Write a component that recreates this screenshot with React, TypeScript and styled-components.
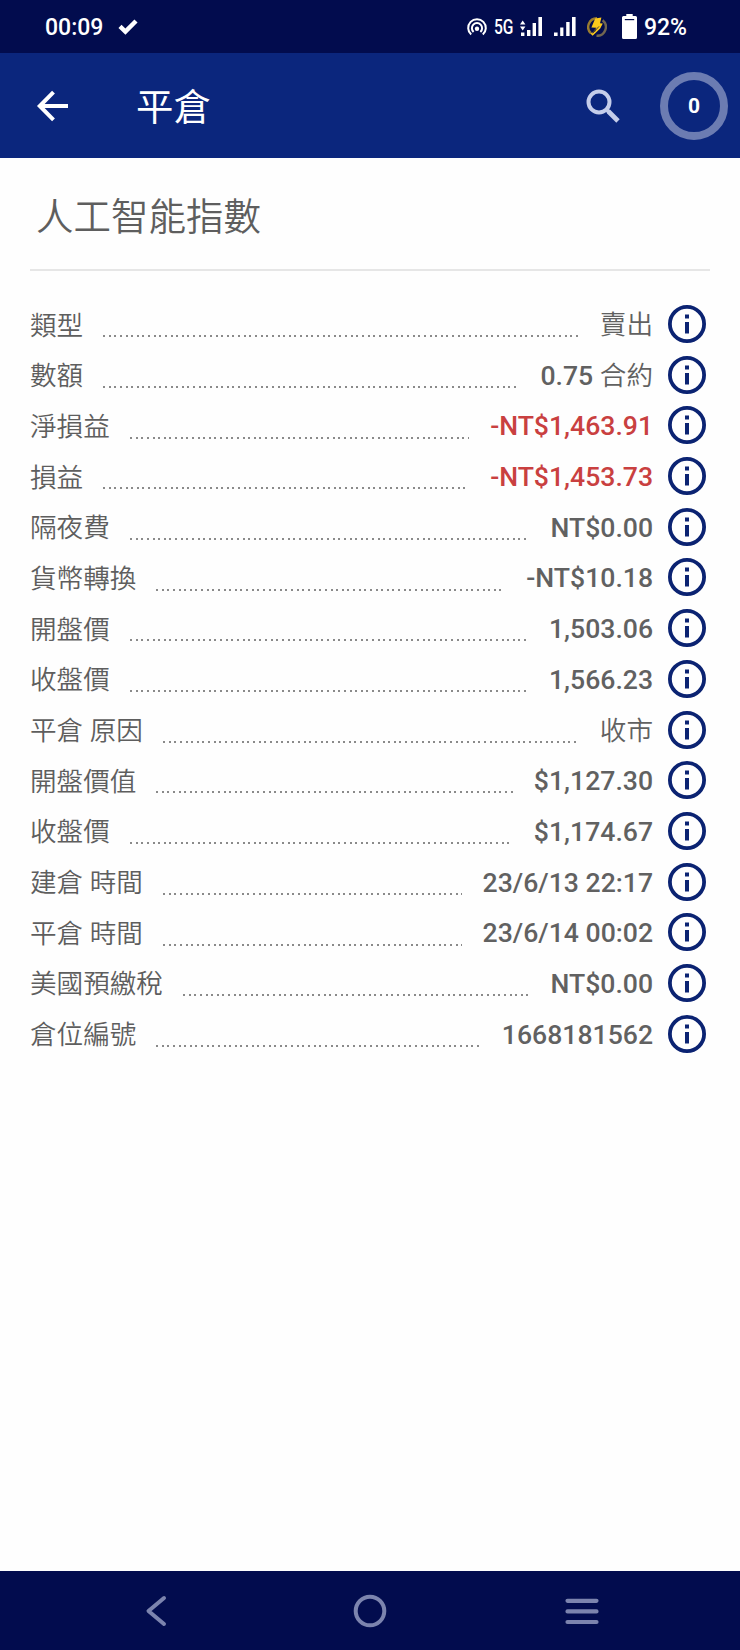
import React from "react";
import styled, { createGlobalStyle } from "styled-components";

const GlobalStyle = createGlobalStyle`
  * { box-sizing: border-box; }
  body { margin: 0; background: #fff; }
`;

const Screen = styled.div`
  display: flex;
  flex-direction: column;
  width: 740px;
  height: 1650px;
  background: #fefefe;
  color: #5e5e5e;
  font-family: Roboto, "Noto Sans CJK TC", sans-serif;
`;

const StatusBar = styled.header`
  display: flex;
  align-items: center;
  height: 53px;
  padding: 0 54px 0 45px;
  background: #020c4e;
  color: #fff;
  font-size: 23px;
  font-weight: 500;
`;

const Clock = styled.span`
  width: 73px;
  line-height: 53px;
  padding-top: 1px;
`;

const StatusIcons = styled.div`
  display: flex;
  align-items: center;
  margin-left: auto;
  line-height: 53px;
`;

const Network = styled.span`
  width: 20px;
  margin: 1px 6px 0 7px;
  font-size: 20px;
  transform: scaleX(0.78);
  transform-origin: left;
`;

const Battery = styled.span`
  width: 42px;
  margin-left: 7px;
  padding-top: 1px;
  letter-spacing: -0.1px;
`;

const AppBar = styled.div`
  display: flex;
  align-items: center;
  height: 105px;
  padding: 0 12px 0 36px;
  background: #0b267d;
  color: #fff;
`;

const Title = styled.h1`
  flex: 1;
  margin: 0 0 0 67px;
  padding-top: 5px;
  font-size: 37.4px;
  font-weight: 400;
  line-height: 54px;
`;

const Counter = styled.div`
  display: flex;
  align-items: center;
  justify-content: center;
  width: 68px;
  height: 68px;
  margin-left: 40px;
  border: 8px solid #6c7cb2;
  border-radius: 50%;
  font-size: 21px;
  font-weight: 700;
  padding-top: 1px;
`;

const Content = styled.main`
  flex: 1;
  padding: 0 30px;
`;

const Heading = styled.h2`
  height: 113px;
  margin: 0;
  padding: 32px 0 0 6px;
  border-bottom: 2px solid #e6e6e6;
  font-size: 37.5px;
  font-weight: 350;
  line-height: 54px;
`;

const Details = styled.div`
  padding-top: 27.7px;
`;

const Row = styled.div`
  display: flex;
  align-items: center;
  height: 50.69px;
  padding-right: 4px;
  font-size: 26.6px;
  line-height: 40px;
  white-space: nowrap;
`;

const Label = styled.span`
  padding-top: 3px;
  font-weight: 350;
`;

const Leader = styled.span`
  flex: 1;
  height: 2px;
  margin: 24.5px 21px 0 20px;
  background: repeating-linear-gradient(90deg, #8a8a8a 0 2px, transparent 2px 5.63px);
`;

const Value = styled.span<{ $loss?: boolean }>`
  padding-top: 2px;
  color: ${(p) => (p.$loss ? "#c94040" : "#616161")};
  font-weight: 500;
`;

const Han = styled.span`
  font-weight: 350;
`;

const InfoButton = styled.button`
  display: flex;
  margin: 0 0 0 15px;
  padding: 0;
  border: 0;
  background: none;
`;

const NavBar = styled.nav`
  display: flex;
  align-items: center;
  height: 79px;
  padding: 0 0 0 145px;
  background: #020c4e;
`;

const NavButton = styled.button<{ $gap?: number }>`
  display: flex;
  margin: 0 0 0 ${(p) => p.$gap ?? 0}px;
  padding: 0;
  border: 0;
  background: none;
`;

const Spacer = styled.span<{ $w: number }>`
  width: ${(p) => p.$w}px;
`;

type Detail = { label: string; value?: string; han?: string; loss?: boolean };

const details: Detail[] = [
  { label: "類型", han: "賣出" },
  { label: "數額", value: "0.75 ", han: "合約" },
  { label: "淨損益", value: "-NT$1,463.91", loss: true },
  { label: "損益", value: "-NT$1,453.73", loss: true },
  { label: "隔夜費", value: "NT$0.00" },
  { label: "貨幣轉換", value: "-NT$10.18" },
  { label: "開盤價", value: "1,503.06" },
  { label: "收盤價", value: "1,566.23" },
  { label: "平倉 原因", han: "收市" },
  { label: "開盤價值", value: "$1,127.30" },
  { label: "收盤價", value: "$1,174.67" },
  { label: "建倉 時間", value: "23/6/13 22:17" },
  { label: "平倉 時間", value: "23/6/14 00:02" },
  { label: "美國預繳稅", value: "NT$0.00" },
  { label: "倉位編號", value: "1668181562" },
];

const CheckIcon = () => (
  <svg width="20" height="16" viewBox="0 0 20 16" fill="none" stroke="#fff" strokeWidth="4.4">
    <path d="M2 7.4 7.4 12.6 18 2" />
  </svg>
);

const HotspotIcon = () => (
  <svg width="20" height="18" viewBox="0 0 20 18" fill="none" stroke="#fff" strokeWidth="2">
    <path d="M4.2 16.6A8.8 8.8 0 1 1 15.8 16.6" />
    <path d="M6.6 14A5.1 5.1 0 1 1 13.4 14" />
    <circle cx="10" cy="10.8" r="2.2" fill="#fff" stroke="none" />
  </svg>
);

const DataSignalIcon = () => (
  <svg width="23" height="20" viewBox="0 0 23 20" fill="#fff">
    <path d="M0 7.6 2.7 3.6 5.4 7.6ZM0 9.4H5.4L2.7 13.4ZM1 15.5h3.4V19H1ZM7 13h3.4v6H7ZM12.6 6h3.4v13h-3.4ZM18.4 0H22v19h-3.6Z" />
  </svg>
);

const SignalIcon = () => (
  <svg width="22" height="20" viewBox="0 0 22 20" fill="#fff">
    <path d="M0 15.4h3.6V19H0ZM6.2 10.4h3.2V19H6.2ZM12.2 5h3.4v14h-3.4ZM18 0h3.6v19H18Z" />
  </svg>
);

const BoltIcon = () => (
  <svg width="20" height="20" viewBox="0 0 20 20" fill="none">
    <path d="M10 1.2A8.8 8.8 0 0 0 4 16.4" stroke="#9a7c30" strokeWidth="2.4" />
    <path d="M15.6 3.2A8.8 8.8 0 0 1 9.5 18.8" stroke="#716650" strokeWidth="2.4" />
    <path d="M8.2 1.6 14.4.6 13 6.2 15.8 6.6 13.2 11.6 5.6 18.8 3.4 16.4 8.4 14.2 9 10.8 4.4 10.4Z" fill="#fbc91c" />
    <path d="M9 10.8 5.8 16.2 12 9.4" stroke="#4b4032" strokeWidth="1" />
  </svg>
);

const BatteryIcon = () => (
  <svg width="15" height="25" viewBox="0 0 15 25">
    <path d="M4.3 0h6.4v2H13.5a1.5 1.5 0 0 1 1.5 1.5v20a1.5 1.5 0 0 1-1.5 1.5h-12A1.5 1.5 0 0 1 0 23.5v-20A1.5 1.5 0 0 1 1.5 2h2.8Z" fill="#fff" />
    <path d="M2.8 5.6h9.4" stroke="#020b4b" strokeWidth="1.2" />
  </svg>
);

const BackIcon = () => (
  <svg width="33" height="32" viewBox="0 0 33 32" fill="none" stroke="#fff" strokeWidth="4">
    <path d="M32 16H4M17.5 2.2 3.8 16 17.5 29.8" />
  </svg>
);

const SearchIcon = () => (
  <svg width="34" height="34" viewBox="0 0 34 34" fill="none" stroke="#c5cdea">
    <circle cx="13" cy="13" r="10.5" strokeWidth="4" />
    <path d="M20.5 20.5 23 23" strokeWidth="4" />
    <path d="M22.5 22.5 32 32" strokeWidth="4.8" />
  </svg>
);

const InfoIcon = () => (
  <svg width="38" height="38" viewBox="0 0 38 38">
    <circle cx="19" cy="19" r="17.1" fill="none" stroke="#0b2372" strokeWidth="3.8" />
    <path d="M17 9.6h4v4h-4ZM17 17h4v11.6h-4Z" fill="#0b2372" />
  </svg>
);

export default function App() {
  return (
    <Screen>
      <GlobalStyle />
      <StatusBar>
        <Clock>00:09</Clock>
        <CheckIcon />
        <StatusIcons>
          <HotspotIcon />
          <Network>5G</Network>
          <DataSignalIcon />
          <Spacer $w={11} />
          <SignalIcon />
          <Spacer $w={11} />
          <BoltIcon />
          <Spacer $w={15} />
          <BatteryIcon />
          <Battery>92%</Battery>
        </StatusIcons>
      </StatusBar>
      <AppBar>
        <BackIcon />
        <Title>平倉</Title>
        <SearchIcon />
        <Counter>0</Counter>
      </AppBar>
      <Content>
        <Heading>人工智能指數</Heading>
        <Details>
          {details.map((d, i) => (
            <Row key={i}>
              <Label>{d.label}</Label>
              <Leader />
              <Value $loss={d.loss}>
                {d.value}
                {d.han && <Han>{d.han}</Han>}
              </Value>
              <InfoButton aria-label={d.label}>
                <InfoIcon />
              </InfoButton>
            </Row>
          ))}
        </Details>
      </Content>
      <NavBar>
        <NavButton aria-label="返回">
          <svg width="22" height="32" viewBox="0 0 22 32" fill="none" stroke="#7c84ae" strokeWidth="4" strokeLinecap="round" strokeLinejoin="round">
            <path d="M19 3 3.5 16 19 29" />
          </svg>
        </NavButton>
        <NavButton aria-label="主畫面" $gap={186}>
          <svg width="34" height="34" viewBox="0 0 34 34" fill="none" stroke="#7c84ae" strokeWidth="4">
            <circle cx="17" cy="17" r="14.3" />
          </svg>
        </NavButton>
        <NavButton aria-label="選單" $gap={178}>
          <svg width="34" height="28" viewBox="0 0 34 28" fill="none" stroke="#7c84ae" strokeWidth="4.2" strokeLinecap="round">
            <path d="M2.5 3.8h29M2.5 14.4h29M2.5 25h29" />
          </svg>
        </NavButton>
      </NavBar>
    </Screen>
  );
}
